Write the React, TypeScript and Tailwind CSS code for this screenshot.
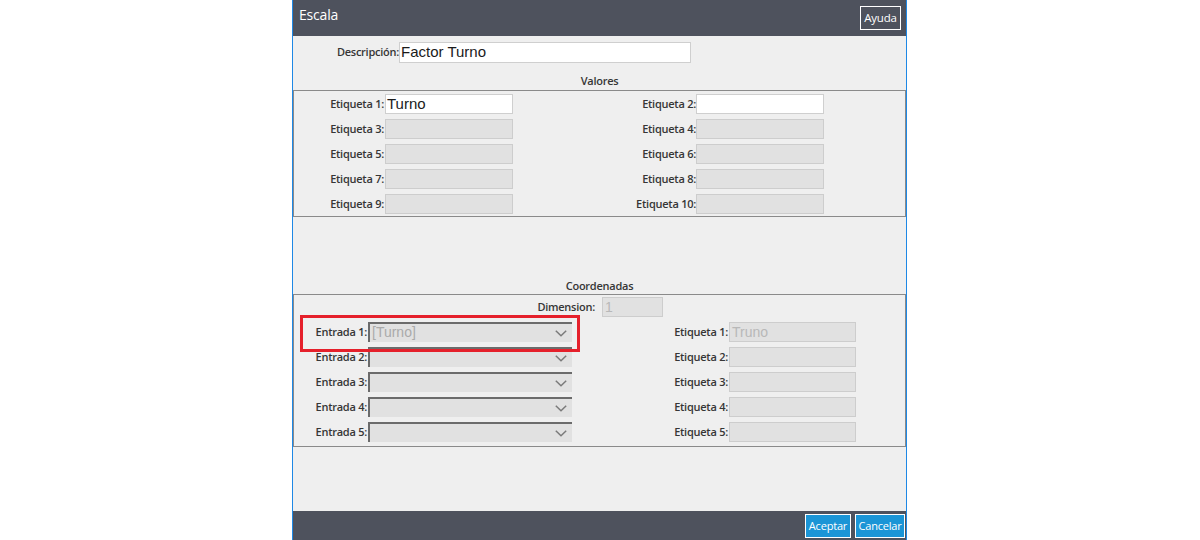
import React from "react";

const LBL = "font-['Open_Sans',sans-serif] text-[11px] font-semibold text-[#363636] whitespace-nowrap tracking-[-0.25px]";
const TXT = "font-['Liberation_Sans',Arial,sans-serif]";

function Chevron() {
  return (
    <svg width="12" height="7" viewBox="0 0 12 7" className="absolute right-[5px] top-[6px]">
      <polyline points="0.8,0.8 6,5.8 11.2,0.8" fill="none" stroke="#7a7a7a" strokeWidth="1.5" />
    </svg>
  );
}

function Disabled({ w, text }: { w: string; text?: string }) {
  return (
    <div className={`${w} h-[20px] bg-[#e1e1e1] border border-[#cdcdcd] ${TXT} text-[14px] leading-[18px] text-[#b8b8b8] pl-[2px] overflow-hidden`}>
      {text}
    </div>
  );
}

function White({ w, text, size }: { w: string; text?: string; size: string }) {
  return (
    <div className={`${w} bg-white border border-[#cfcfcf] ${TXT} ${size} text-[#1a1a1a] pl-[1px] overflow-hidden whitespace-nowrap`}>
      {text}
    </div>
  );
}

function Select({ text }: { text?: string }) {
  return (
    <div className={`relative w-[204px] h-[20px] bg-[#e1e1e1] border-t-2 border-l-2 border-[#6b6b6b] ${TXT} text-[14px] leading-[17px] text-[#aaaaaa] pl-[2px]`}>
      {text}
      <Chevron />
    </div>
  );
}

export default function App() {
  const valores = [
    ["Etiqueta 1:", "Etiqueta 2:"],
    ["Etiqueta 3:", "Etiqueta 4:"],
    ["Etiqueta 5:", "Etiqueta 6:"],
    ["Etiqueta 7:", "Etiqueta 8:"],
    ["Etiqueta 9:", "Etiqueta 10:"],
  ];
  return (
    <div className="w-full h-[540px] bg-white">
      <div className="ml-[292px] w-[615px] h-[540px] border-x border-[#1e88e5] bg-[#efefef] flex flex-col">
        {/* header */}
        <div className="h-[36px] bg-[#4e525d] flex items-start justify-between pl-[6px] pr-[5px]">
          <div className="font-['Open_Sans',sans-serif] text-[14px] leading-[20px] text-white mt-[5px] tracking-[-0.2px]">Escala</div>
          <div className="mt-[6px] w-[41px] h-[24px] border border-white font-['Open_Sans',sans-serif] text-[11.5px] leading-[21px] text-white text-center tracking-[-0.2px]">
            Ayuda
          </div>
        </div>

        {/* body */}
        <div className="flex-1 flex flex-col">
          <div className="flex items-center mt-[6px]">
            <div className={`${LBL} w-[106px] text-right`}>Descripción:</div>
            <White w="w-[292px] h-[21px]" size="text-[15px] leading-[18px]" text="Factor Turno" />
          </div>

          <div className={`${LBL} text-center leading-[16px] mt-[10px] mb-[1px]`}>Valores</div>
          <div className="border border-[#8a8a8a] pt-[3px] pb-[2px] flex flex-col gap-[5px]">
            {valores.map(([a, b], i) => (
              <div key={i} className="flex items-center h-[20px]">
                <div className="w-[306px] flex items-center">
                  <div className={`${LBL} w-[91px] text-right pr-[1px]`}>{a}</div>
                  {i === 0 ? (
                    <White w="w-[128px] h-[20px]" size="text-[15px] leading-[17px]" text="Turno" />
                  ) : (
                    <Disabled w="w-[128px]" />
                  )}
                </div>
                <div className={`${LBL} w-[96px] text-right`}>{b}</div>
                {i === 0 ? (
                  <White w="w-[128px] h-[20px]" size="text-[15px] leading-[17px]" />
                ) : (
                  <Disabled w="w-[128px]" />
                )}
              </div>
            ))}
          </div>

          <div className={`${LBL} text-center leading-[16px] mt-[61px]`}>Coordenadas</div>
          <div className="relative border border-[#8a8a8a] pt-[2px] pb-[4px] flex flex-col gap-[5px]">
            <div className="flex items-center h-[20px]">
              <div className={`${LBL} w-[301px] text-right`}>Dimension:</div>
              <div className="ml-[7px]">
                <Disabled w="w-[61px]" text="1" />
              </div>
            </div>
            {[1, 2, 3, 4, 5].map((n) => (
              <div key={n} className="flex items-center h-[20px]">
                <div className={`${LBL} w-[74px] text-right pr-[1px]`}>{`Entrada ${n}:`}</div>
                <Select text={n === 1 ? "[Turno]" : undefined} />
                <div className={`${LBL} w-[157px] text-right pr-[1px]`}>{`Etiqueta ${n}:`}</div>
                <Disabled w="w-[127px]" text={n === 1 ? "Truno" : undefined} />
              </div>
            ))}
            <div className="absolute left-[6px] top-[20px] w-[280px] h-[37px] border-[3px] border-[#e5202b]" />
          </div>
        </div>

        {/* footer */}
        <div className="h-[29px] bg-[#4e525d] flex items-start justify-end gap-[4px] pr-[1px] pt-[3px]">
          <div className="w-[46px] h-[24px] bg-[#1b95d6] border border-white font-['Open_Sans',sans-serif] text-[11px] leading-[21px] text-white text-center whitespace-nowrap tracking-[-0.2px]">
            Aceptar
          </div>
          <div className="w-[50px] h-[24px] bg-[#1b95d6] border border-white font-['Open_Sans',sans-serif] text-[11px] leading-[21px] text-white text-center whitespace-nowrap tracking-[-0.2px]">
            Cancelar
          </div>
        </div>
      </div>
    </div>
  );
}
